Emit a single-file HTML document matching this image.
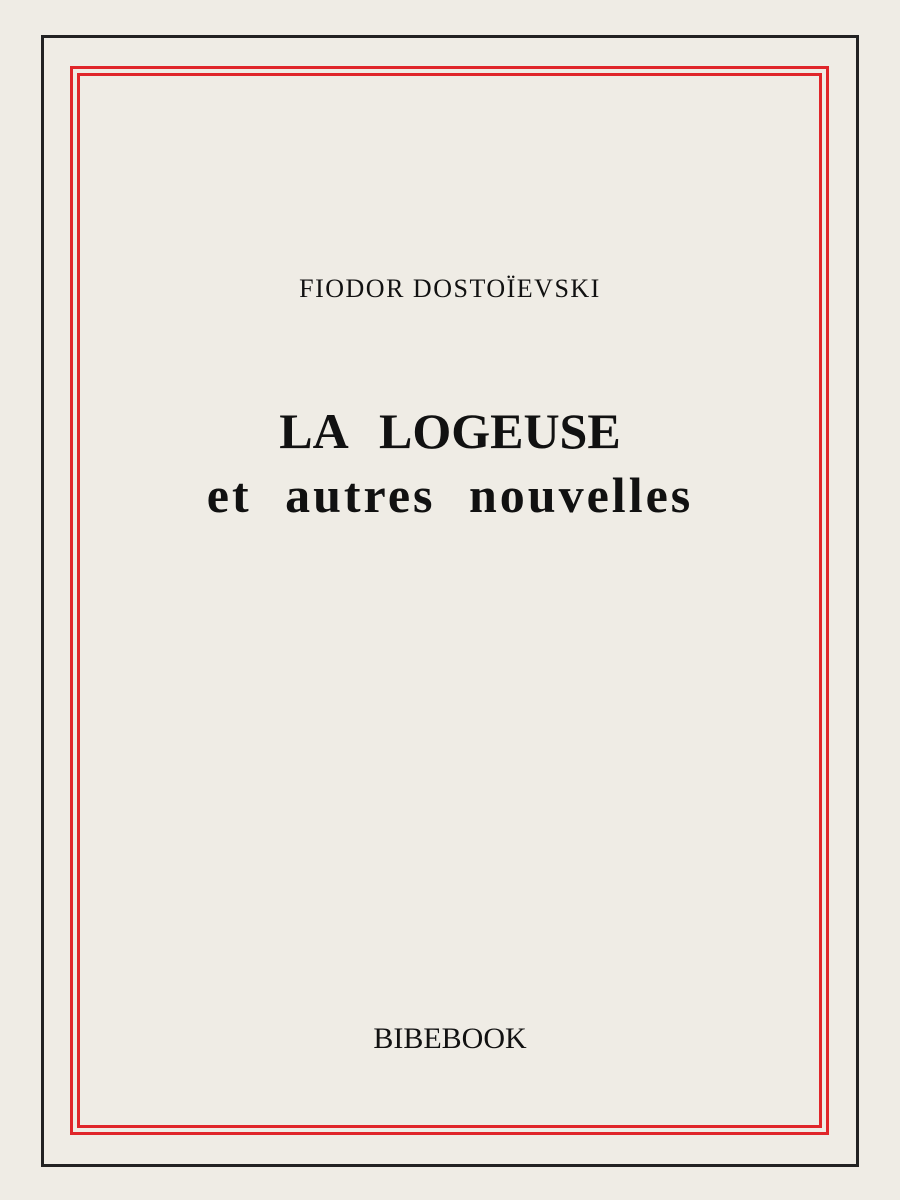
<!DOCTYPE html>
<html><head><style>
body{margin:0;width:900px;height:1200px;background:#efece5;position:relative;font-family:"Liberation Serif",serif;color:#111;overflow:hidden}
.b{position:absolute;box-sizing:border-box}
.t{position:absolute;left:0;width:900px;text-align:center;white-space:pre}
</style></head><body>
<div class="b" style="left:41px;top:35px;width:818px;height:1132px;border:3px solid #222"></div>
<div class="b" style="left:70px;top:66px;width:759px;height:1069px;border:3px solid #e0262a"></div>
<div class="b" style="left:77px;top:73px;width:745px;height:1055px;border:3px solid #e0262a"></div>
<div class="t" style="top:274px;font-size:26px;letter-spacing:1.5px">FIODOR DOSTOÏEVSKI</div>
<div class="t" style="top:402px;font-size:50px;font-weight:bold;word-spacing:4px">LA  LOGEUSE</div>
<div class="t" style="top:466px;font-size:50px;font-weight:bold;letter-spacing:3px;word-spacing:18px">et autres nouvelles</div>
<div class="t" style="top:1022px;font-size:30px">BIBEBOOK</div>
</body></html>
